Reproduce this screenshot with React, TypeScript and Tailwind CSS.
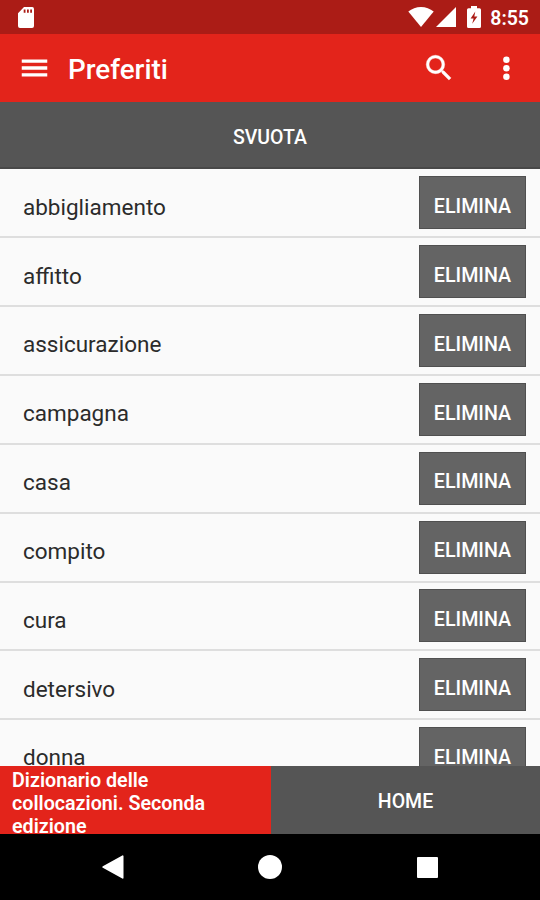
const words = [
	'abbigliamento',
	'affitto',
	'assicurazione',
	'campagna',
	'casa',
	'compito',
	'cura',
	'detersivo',
	'donna',
]

function StatusBar() {
	return (
		<div className="flex h-[34px] shrink-0 items-center bg-[#ab1c16] pl-[18px] pr-[11px] text-white">
			<svg width="16" height="21" viewBox="0 0 16 21" fill="currentColor" className="mt-px">
				<path
					fillRule="evenodd"
					d="M14.2 0H6L0 6.2V19a2 2 0 0 0 2 2h12a2 2 0 0 0 2-2V2a2 2 0 0 0-1.8-2zM5.7 2.4h1.8v3.4H5.7zM9 2.4h1.8v3.4H9zM12.2 2.4H14v3.4h-1.8z"
				/>
			</svg>
			<div className="ml-auto flex items-center">
				<svg width="26" height="20" viewBox="0 0 26 20" fill="currentColor" className="mr-[2px]">
					<path d="M13 20 0.3 4.6C3.8 1.7 8.2 0 13 0s9.2 1.7 12.7 4.6z" />
				</svg>
				<svg width="20" height="20" viewBox="0 0 20 20" fill="currentColor" className="mr-[11px]">
					<path d="M20 0v20H0z" />
				</svg>
				<svg width="14" height="22" viewBox="0 0 14 22" fill="currentColor" className="mr-[9px]">
					<path
						fillRule="evenodd"
						d="M4 0h6v2.3h2.5A1.5 1.5 0 0 1 14 3.8V20.5A1.5 1.5 0 0 1 12.5 22h-11A1.5 1.5 0 0 1 0 20.5V3.8A1.5 1.5 0 0 1 1.5 2.3H4zM8.3 5.5 3.6 12.5h3l-1.4 5.3L10.4 10.5H7.3z"
					/>
				</svg>
				<span className="mt-[3px] text-[19.5px] leading-none font-semibold">8:55</span>
			</div>
		</div>
	)
}

function AppBar() {
	return (
		<header className="flex h-[68px] shrink-0 items-center bg-[#e3241b] pl-[17px] pr-[17px] text-white">
			<svg width="35" height="34" viewBox="0 0 24 24" fill="currentColor">
				<path d="M3 18h18v-2.3H3zM3 13.15h18v-2.3H3zM3 6v2.3h18V6z" />
			</svg>
			<h1 className="ml-[16px] mt-[4px] text-[27.8px] leading-none font-medium">Preferiti</h1>
			<button type="button" className="ml-auto mr-[33px]" aria-label="Cerca">
				<svg width="34" height="34" viewBox="0 0 24 24" fill="currentColor" stroke="currentColor" strokeWidth="0.3">
					<path d="M15.5 14h-.79l-.28-.27A6.471 6.471 0 0 0 16 9.5 6.5 6.5 0 1 0 9.5 16c1.61 0 3.09-.59 4.23-1.57l.27.28v.79l5 4.99L20.49 19l-4.99-5zm-6 0C7.01 14 5 11.99 5 9.5S7.01 5 9.5 5 14 7.01 14 9.5 11.99 14 9.5 14z" />
				</svg>
			</button>
			<button type="button" aria-label="Altro">
				<svg width="34" height="34" viewBox="0 0 24 24" fill="currentColor">
					<circle cx="12.3" cy="6.2" r="2.3" />
					<circle cx="12.3" cy="12.1" r="2.3" />
					<circle cx="12.3" cy="18.1" r="2.3" />
				</svg>
			</button>
		</header>
	)
}

function WordRow({ word }: { word: string }) {
	return (
		<li className="flex h-[68.85px] shrink-0 items-center justify-between border-b-2 border-[#dedede] pl-[23px] pr-[14px]">
			<span className="mt-[8px] text-[22.5px] leading-none text-[#2b2b2b]">{word}</span>
			<button
				type="button"
				className="h-[53px] w-[107px] border border-[#505050] bg-[#646464] pt-[8px] text-[19.7px] leading-none font-medium text-white"
			>
				ELIMINA
			</button>
		</li>
	)
}

function NavBar() {
	return (
		<nav className="flex h-[66px] shrink-0 items-center justify-between bg-black pl-[102px] pr-[102px] text-white">
			<svg width="22" height="24" viewBox="0 0 22 24" fill="currentColor">
				<path d="M20.3.4.8 11.2a1 1 0 0 0 0 1.6l19.5 10.8a.8.8 0 0 0 1.2-.7V1.1A.8.8 0 0 0 20.3.4z" />
			</svg>
			<div className="mr-px size-6 rounded-full bg-white" />
			<div className="size-[21px] rounded-[1px] bg-white" />
		</nav>
	)
}

export default function App() {
	return (
		<div className="flex h-[900px] w-[540px] flex-col overflow-hidden bg-[#fafafa] font-[Roboto,sans-serif]">
			<StatusBar />
			<AppBar />
			<button
				type="button"
				className="h-[67px] w-full shrink-0 border-b-2 border-[#484848] bg-[#555555] pt-[6px] text-[19.5px] font-medium text-white"
			>
				SVUOTA
			</button>
			<ul className="flex min-h-0 flex-1 flex-col overflow-hidden pt-[0.5px]">
				{words.map((word) => (
					<WordRow key={word} word={word} />
				))}
			</ul>
			<footer className="flex h-[68px] shrink-0 overflow-hidden text-white">
				<div className="w-[271px] bg-[#e3241b] pt-[3px] pl-[12px] pr-[40px] text-[19.7px] leading-[23px] font-semibold">
					Dizionario delle collocazioni. Seconda edizione
				</div>
				<button type="button" className="flex-1 bg-[#555555] pt-[3px] text-[19.5px] font-medium">
					HOME
				</button>
			</footer>
			<NavBar />
		</div>
	)
}
